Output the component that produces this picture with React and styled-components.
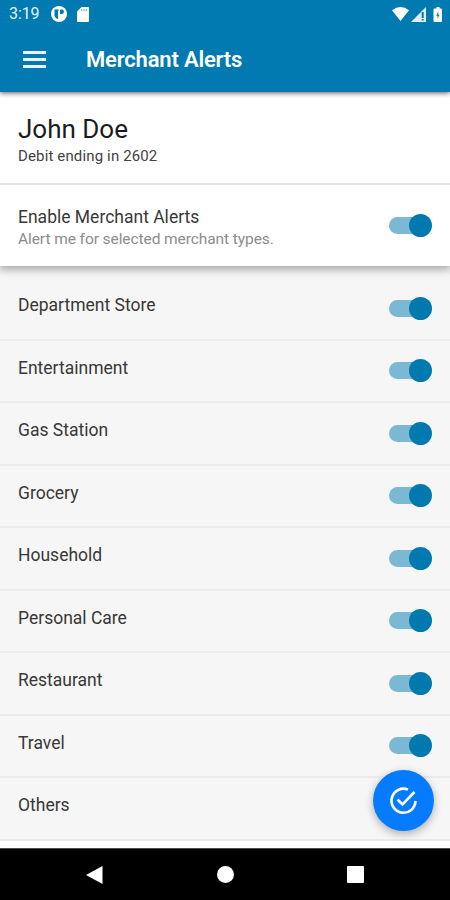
import React, { useState } from "react";
import styled, { createGlobalStyle } from "styled-components";

const GlobalStyle = createGlobalStyle`
  * {
    box-sizing: border-box;
  }

  body {
    margin: 0;
    background: #fff;
    font-family: Roboto, "Liberation Sans", sans-serif;
  }
`;

const Screen = styled.div`
  position: relative;
  display: flex;
  flex-direction: column;
  width: 450px;
  height: 900px;
  overflow: hidden;
  background: #fff;
`;

const Header = styled.header`
  position: relative;
  z-index: 2;
  flex: none;
  height: 92px;
  color: #fff;
  background: #007ab0;
  box-shadow: 0 1px 5px rgba(0, 0, 0, 0.65);
`;

const StatusBar = styled.div`
  display: flex;
  align-items: center;
  height: 28px;
  padding: 0 7px 0 9px;
`;

const Clock = styled.span`
  width: 42px;
  font-size: 16px;
  line-height: 28px;
  letter-spacing: -0.1px;
  color: #e4f3fa;
`;

const StatusIcons = styled.div`
  display: flex;
  align-items: center;
  gap: ${(props) => props.$gap}px;
  margin-left: ${(props) => (props.$right ? "auto" : "0")};

  & svg {
    display: block;
  }
`;

const Toolbar = styled.div`
  display: flex;
  align-items: center;
  height: 62px;
  padding-left: 23px;
`;

const MenuButton = styled.button`
  display: flex;
  flex-direction: column;
  gap: 4px;
  width: 23px;
  margin-right: 40px;
  padding: 1px 0 0;
  border: none;
  background: none;
`;

const MenuLine = styled.span`
  width: 23px;
  height: 3px;
  background: #e9f5fa;
`;

const Title = styled.h1`
  margin: 0;
  padding-top: 1px;
  font-size: 22px;
  font-weight: 600;
  line-height: 30px;
  letter-spacing: -0.18px;
`;

const Account = styled.section`
  flex: none;
  height: 93px;
  padding: 22px 18px 0;
  border-bottom: 2px solid #e3e3e3;
`;

const AccountName = styled.h2`
  margin: 0;
  font-size: 26px;
  font-weight: 400;
  line-height: 30px;
  color: #1c1c1c;
`;

const AccountCard = styled.p`
  margin: 2px 0 0;
  font-size: 15px;
  line-height: 20px;
  letter-spacing: 0.14px;
  color: #424242;
`;

/* clip-path keeps the shadow below the panel only */
const MainSetting = styled.section`
  position: relative;
  z-index: 1;
  display: flex;
  flex: none;
  justify-content: space-between;
  height: 81px;
  padding: 20px 18px 0;
  background: #fff;
  box-shadow: 0 2px 9px 1px rgba(0, 0, 0, 0.36);
  clip-path: inset(0 0 -16px 0);
`;

const Label = styled.div`
  font-size: 17.5px;
  line-height: 24px;
  color: #383838;
`;

const Hint = styled.div`
  font-size: 15.5px;
  line-height: 20px;
  letter-spacing: -0.08px;
  color: #8c8c8c;
`;

const List = styled.ul`
  flex: none;
  margin: 0;
  padding: 12px 0 0;
  list-style: none;
  background: #f6f6f6;
`;

const Row = styled.li`
  display: flex;
  justify-content: space-between;
  height: 62.5px;
  padding: 15px 18px 0;
  border-bottom: 2px solid #ebebeb;
`;

const Toggle = styled.button`
  display: flex;
  align-items: center;
  width: 43px;
  height: 23px;
  margin-top: ${(props) => props.$top}px;
  padding: 0;
  border: none;
  background: none;
`;

const Track = styled.span`
  flex: none;
  width: 40px;
  height: 17px;
  margin-right: ${(props) => (props.$on ? "-20px" : "-40px")};
  border-radius: 9px;
  background: ${(props) => (props.$on ? "#7bb8d3" : "#c4c4c4")};
`;

const Thumb = styled.span`
  flex: none;
  width: 23px;
  height: 23px;
  border-radius: 50%;
  background: ${(props) => (props.$on ? "#0079af" : "#fafafa")};
`;

const Fab = styled.button`
  position: absolute;
  z-index: 3;
  right: 16px;
  bottom: 69px;
  display: flex;
  align-items: center;
  justify-content: center;
  width: 61px;
  height: 61px;
  padding: 0;
  border: none;
  border-radius: 50%;
  background: #057cff;
  box-shadow: 0 3px 8px rgba(0, 0, 0, 0.3);
`;

const NavBar = styled.nav`
  display: flex;
  align-items: center;
  justify-content: space-between;
  height: 52px;
  margin-top: auto;
  padding: 0 86px;
  border-top: 1px solid #4a4a4a;
  background: #000;

  & svg {
    display: block;
  }
`;

const merchants = [
  "Department Store",
  "Entertainment",
  "Gas Station",
  "Grocery",
  "Household",
  "Personal Care",
  "Restaurant",
  "Travel",
  "Others",
];

const Switch = ({ top }) => {
  const [on, setOn] = useState(true);
  return (
    <Toggle $top={top} onClick={() => setOn(!on)}>
      <Track $on={on} />
      <Thumb $on={on} />
    </Toggle>
  );
};

const App = () => {
  return (
    <>
      <GlobalStyle />
      <Screen>
        <Header>
          <StatusBar>
            <Clock>3:19</Clock>
            <StatusIcons $gap={10}>
              <svg width="16" height="16" viewBox="0 0 16 16">
                <circle cx="8" cy="8" r="8" fill="#fff" />
                <path d="M3.500 3.500H7.800v1.200H7v8.500A5.500 5.500 0 0 1 3.500 10z" fill="#007ab0" />
                <path d="M9 3.500h1.700a2.200 2.200 0 0 1 0 4.500H9z" fill="#007ab0" />
              </svg>
              <svg width="12" height="15" viewBox="0 0 12 15">
                <path
                  d="M4.500 0H11a1 1 0 0 1 1 1v13a1 1 0 0 1-1 1H1a1 1 0 0 1-1-1V4.500z"
                  fill="#fff"
                />
                <path d="M4.700 2v2.300M7 2v2.300M9.300 2v2.300" stroke="#5fa9cb" />
              </svg>
            </StatusIcons>
            <StatusIcons $right $gap={2}>
              <svg width="17" height="14" viewBox="0 0 17 14">
                <path d="M0 3.200Q8.500-3 17 3.200L8.500 14z" fill="#fff" />
              </svg>
              <svg width="15" height="15" viewBox="0 0 15 15">
                <path d="M0 15L15 0v15z" fill="#e3f1f7" />
                <path d="M11.700 5v6M11.700 12v1.500" stroke="#007ab0" strokeWidth="2" />
              </svg>
              <svg width="15" height="15" viewBox="0 0 15 15">
                <path
                  d="M8.500 0h3v1.500H13a1 1 0 0 1 1 1V14a1 1 0 0 1-1 1H6.500a1 1 0 0 1-1-1V2.500a1 1 0 0 1 1-1h2z"
                  fill="#fff"
                />
                <path d="M10.300 4.500L8.200 8.800h1.300v3L11.500 7.800h-1.200z" fill="#007ab0" />
              </svg>
            </StatusIcons>
          </StatusBar>
          <Toolbar>
            <MenuButton aria-label="Menu">
              <MenuLine />
              <MenuLine />
              <MenuLine />
            </MenuButton>
            <Title>Merchant Alerts</Title>
          </Toolbar>
        </Header>
        <Account>
          <AccountName>John Doe</AccountName>
          <AccountCard>Debit ending in 2602</AccountCard>
        </Account>
        <MainSetting>
          <div>
            <Label>Enable Merchant Alerts</Label>
            <Hint>Alert me for selected merchant types.</Hint>
          </div>
          <Switch top={9} />
        </MainSetting>
        <List>
          {merchants.map((name) => (
            <Row key={name}>
              <Label>{name}</Label>
              <Switch top={3.5} />
            </Row>
          ))}
        </List>
        <Fab aria-label="Save">
          <svg width="28" height="28" viewBox="0 0 28 28" fill="none">
            <path
              d="M18 2.600A12 12 0 1 0 25.500 14"
              stroke="#fff"
              strokeWidth="2.600"
            />
            <path
              d="M7.500 12.500L12.500 17.500L24.500 5"
              stroke="#fff"
              strokeWidth="2.600"
            />
          </svg>
        </Fab>
        <NavBar>
          <svg width="17" height="18" viewBox="0 0 17 18">
            <path d="M16.500 0v18L0 9z" fill="#fff" />
          </svg>
          <svg width="17" height="17" viewBox="0 0 17 17">
            <circle cx="8.500" cy="8.500" r="8.500" fill="#fff" />
          </svg>
          <svg width="17" height="17" viewBox="0 0 17 17">
            <rect width="17" height="17" rx="1" fill="#fff" />
          </svg>
        </NavBar>
      </Screen>
    </>
  );
};

export default App;
